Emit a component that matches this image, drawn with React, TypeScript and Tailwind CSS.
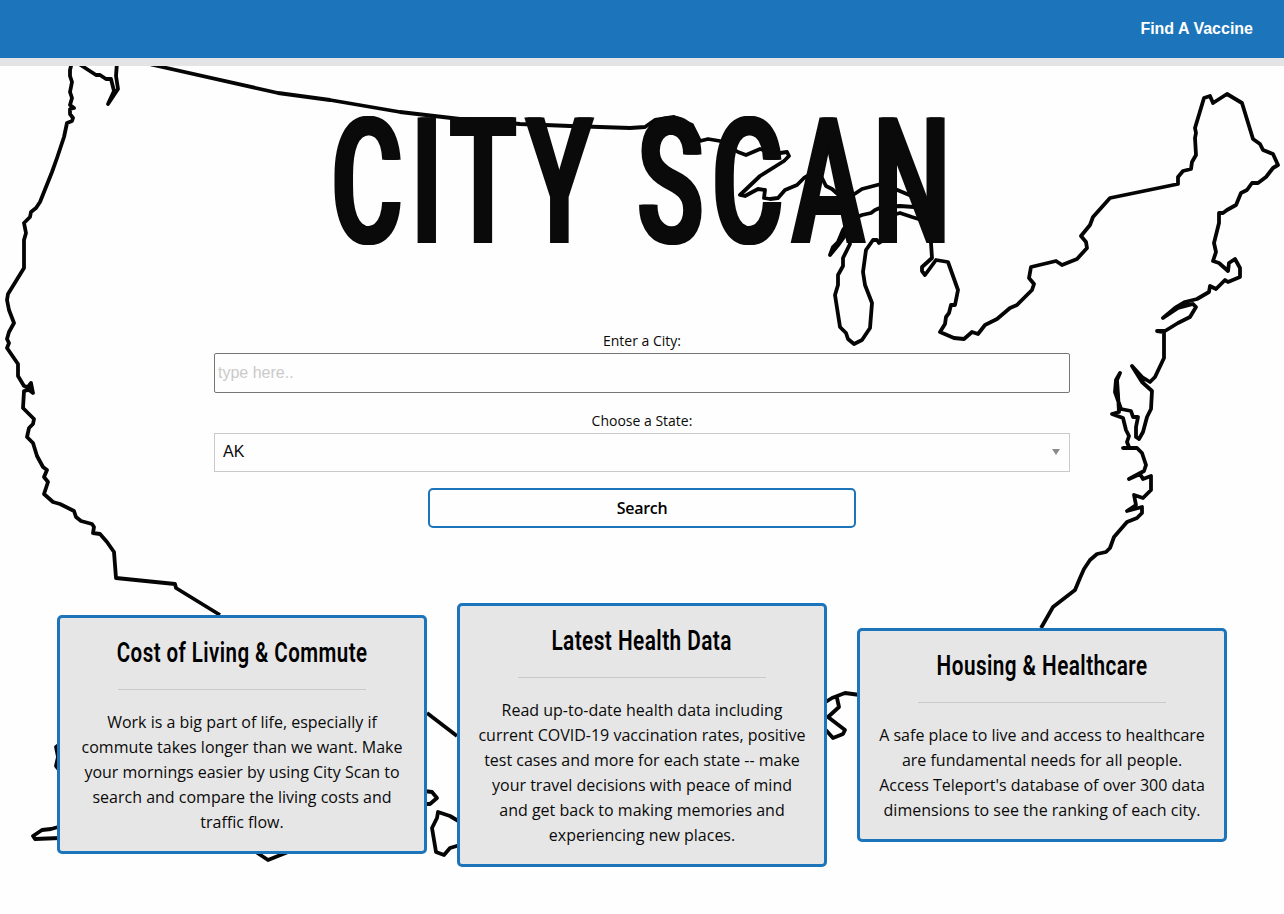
import React from "react";

const cards = [
  {
    title: "Cost of Living & Commute",
    scale: "scale-x-[0.72]",
    text: "Work is a big part of life, especially if commute takes longer than we want. Make your mornings easier by using City Scan to search and compare the living costs and traffic flow.",
  },
  {
    title: "Latest Health Data",
    scale: "scale-x-[0.73]",
    text: "Read up-to-date health data including current COVID-19 vaccination rates, positive test cases and more for each state -- make your travel decisions with peace of mind and get back to making memories and experiencing new places.",
  },
  {
    title: "Housing & Healthcare",
    scale: "scale-x-[0.727]",
    text: "A safe place to live and access to healthcare are fundamental needs for all people. Access Teleport's database of over 300 data dimensions to see the ranking of each city.",
  },
];

const mapPaths = [
  // Pacific coast and southern border
  "M72 62L70 70L70 76L72 82L70 92L72 98L70 105L74 108L70 109L70 114L73 118L72 121L67 123L64 137L57 158L52 172L40 202L36 208L31 212L30 217L24 223L26 233L24 240L24 268L16 281L8 294L7 300L9 310L14 323L9 332L7 339L9 343L7 348L18 364L18 376L24 386L28 387L31 383L33 393L29 390L24 391L23 408L34 419L33 424L29 428L27 437L33 443L37 456L43 467L47 470L44 477L48 482L44 494L53 502L60 504L74 511L76 517L81 521L92 524L94 527L93 533L100 534L107 542L114 552L116 578L175 584L176 588L220 615",
  // Puget Sound
  "M76 62L96 75L100 75L106 79L111 79L114 91L108 104L118 89L116 76L117 62",
  // Northern border, Great Lakes and Atlantic coast
  "M140 62L278 93L330 100L400 112L460 119L520 124L570 126L630 128L645 127L655 120L674 117L692 125L700 141L708 139L720 141L738 152L746 155L760 149L770 152L780 153L787 152L789 156L784 161L760 176L740 195L745 196L758 189L765 190L764 198L770 199L778 198L785 190L797 185L804 178L818 170L826 186L832 189L840 196L850 197L862 189L881 184L895 189L914 197L918 204L914 207L900 206L882 207L875 210L871 213L862 215L850 220L843 230L838 242L833 247L830 255L839 244L847 233L850 244L843 258L843 266L838 275L838 285L835 295L840 327L846 333L848 339L854 344L862 340L870 328L872 303L865 285L863 272L866 250L873 240L877 240L879 243L887 238L889 216L900 213L912 217L925 221L928 235L931 243L932 258L922 267L922 271L925 275L936 260L948 262L958 290L955 305L951 305L949 313L946 317L945 324L940 332L954 338L964 339L972 332L978 334L985 325L997 319L1010 308L1017 305L1032 290L1034 284L1029 278L1031 267L1056 261L1062 265L1077 259L1087 248L1086 242L1081 236L1090 225L1093 217L1110 198L1178 184L1178 177L1183 171L1191 169L1192 162L1196 155L1195 138L1196 133L1195 128L1204 98L1210 96L1213 103L1227 94L1242 103L1253 139L1260 144L1263 150L1273 154L1278 165L1273 168L1266 177L1258 183L1252 183L1247 190L1241 193L1236 205L1227 210L1223 213L1219 213L1219 223L1214 243L1216 252L1213 261L1219 263L1228 271L1229 263L1235 259L1240 268L1240 277L1228 282L1225 280L1216 289L1210 286L1209 292L1197 299L1185 302L1175 308L1163 318L1178 308L1193 304L1196 307L1190 317L1178 323L1165 331L1157 331L1164 332L1164 358L1155 377L1150 382L1142 377L1132 366L1142 382L1152 391L1151 409L1147 417L1143 432L1139 439L1136 437L1136 427L1138 417L1133 417L1131 411L1121 409L1115 392L1116 380L1120 373L1117 380L1118 395L1119 412L1112 414L1123 418L1126 430L1129 436L1127 442L1129 447L1123 448L1137 448L1142 453L1146 465L1144 471L1129 479L1140 474L1143 479L1151 476L1151 490L1143 498L1134 495L1136 505L1127 511L1142 507L1142 513L1137 518L1127 522L1114 537L1110 548L1106 552L1097 554L1090 560L1084 569L1080 578L1075 590L1053 607L1041 628",
  // Gulf coast, Alaska and Hawaii
  "M427 713L457 736",
  "M60 744L56 747L58 757L56 766L60 771M62 826L51 829L42 830L33 836L35 839L60 838M256 852L268 860L288 852",
  "M424 791L432 792L437 798L430 804L424 804M460 822L450 816L438 812L437 818L432 828L436 852L444 855L450 848L460 845",
  "M824 703L832 698L845 693L860 695M837 698L839 707L828 717L845 730L843 734L833 738L824 728",
];

// Narrow inlets that read as solid shapes
const mapFills = [
  "M830 255L833 247L838 242L845 230L847 235L839 245Z",
  "M1163 318L1175 308L1185 302L1193 303L1178 309Z",
  "M24 388L28 387L32 381L34 394L29 391Z",
  "M1120 373L1115 380L1115 392L1121 409L1119 392L1117 383Z",
  "M1132 366L1142 377L1147 381L1142 382Z",
];

function MapOutline() {
  return (
    <svg
      className="pointer-events-none absolute inset-0 h-[914px] w-[1284px]"
      viewBox="0 0 1284 914"
      fill="none"
      aria-hidden="true"
    >
      <g stroke="#050505" strokeWidth="3.8" strokeLinejoin="round">
        {mapPaths.map((d) => (
          <path key={d} d={d} />
        ))}
      </g>
      <g fill="#050505">
        {mapFills.map((d) => (
          <path key={d} d={d} />
        ))}
      </g>
    </svg>
  );
}

export default function App() {
  return (
    <div className="relative isolate flex h-[914px] w-[1284px] flex-col overflow-hidden bg-[#fefefe] font-['Open_Sans',sans-serif] text-[#0a0a0a]">
      <div className="absolute inset-0 -z-10">
        <MapOutline />
      </div>
      <header className="flex h-[66px] shrink-0 items-center justify-end border-b-8 border-[#e4e4e6] bg-[#1c75bb] pr-[31px]">
        <a className="font-['Liberation_Sans',Arial,sans-serif] text-base font-bold text-white">Find A Vaccine</a>
      </header>

      <main className="flex flex-col items-center">
        <h1 className="mt-[53px] flex h-[127px] items-center justify-center whitespace-nowrap font-['Roboto',sans-serif] text-[177px] leading-[127px] font-semibold tracking-[14px] [text-shadow:3px_0_0_#0a0a0a,-3px_0_0_#0a0a0a]">
          <span className="ml-[6px] scale-x-[0.615]">CITY SCAN</span>
        </h1>

        <form className="mt-[82px] flex w-[856px] flex-col items-center">
          <label className="text-sm leading-[25px]">Enter a City:</label>
          <input
            className="h-10 w-full rounded-[2px] border border-[#767676] bg-[#fefefe] px-[3px] font-['Liberation_Sans',Arial,sans-serif] text-base placeholder:text-[#cacaca]"
            placeholder="type here.."
          />
          <label className="mt-[15px] text-sm leading-[25px]">Choose a State:</label>
          <div className="flex h-[39px] w-full items-center justify-between border border-[#cacaca] bg-[#fefefe] pr-[9px] pb-[2px] pl-2 font-['Liberation_Sans',Arial,sans-serif] text-base">
            <span>AK</span>
            <svg className="h-[6px] w-2" viewBox="0 0 8 6" fill="#8a8a8a">
              <path d="M0 0H8L4 6Z" />
            </svg>
          </div>
          <button
            type="button"
            className="mt-4 h-10 w-[428px] rounded-[5px] border-2 border-[#1c75bb] bg-[#fefefe] text-base font-semibold tracking-[-0.3px] text-black"
          >
            Search
          </button>
        </form>

        <section className="mt-[74.8px] flex items-center gap-[30px]">
          {cards.map((card) => (
            <article
              key={card.title}
              className="flex w-[370px] flex-col items-center rounded-[5px] border-[3px] border-[#1c75bb] bg-[#e6e6e6] px-4 pt-4 pb-4 text-center"
            >
              <h2 className="flex h-[39px] items-center justify-center whitespace-nowrap font-['Roboto',sans-serif] text-[28.5px] font-semibold tracking-[0.6px] text-black">
                <span className={card.scale}>{card.title}</span>
              </h2>
              <hr className="mt-4 mb-5 w-[248px] border-t border-[#cacaca]" />
              <p className="text-base leading-[25px]">{card.text}</p>
            </article>
          ))}
        </section>
      </main>
    </div>
  );
}
